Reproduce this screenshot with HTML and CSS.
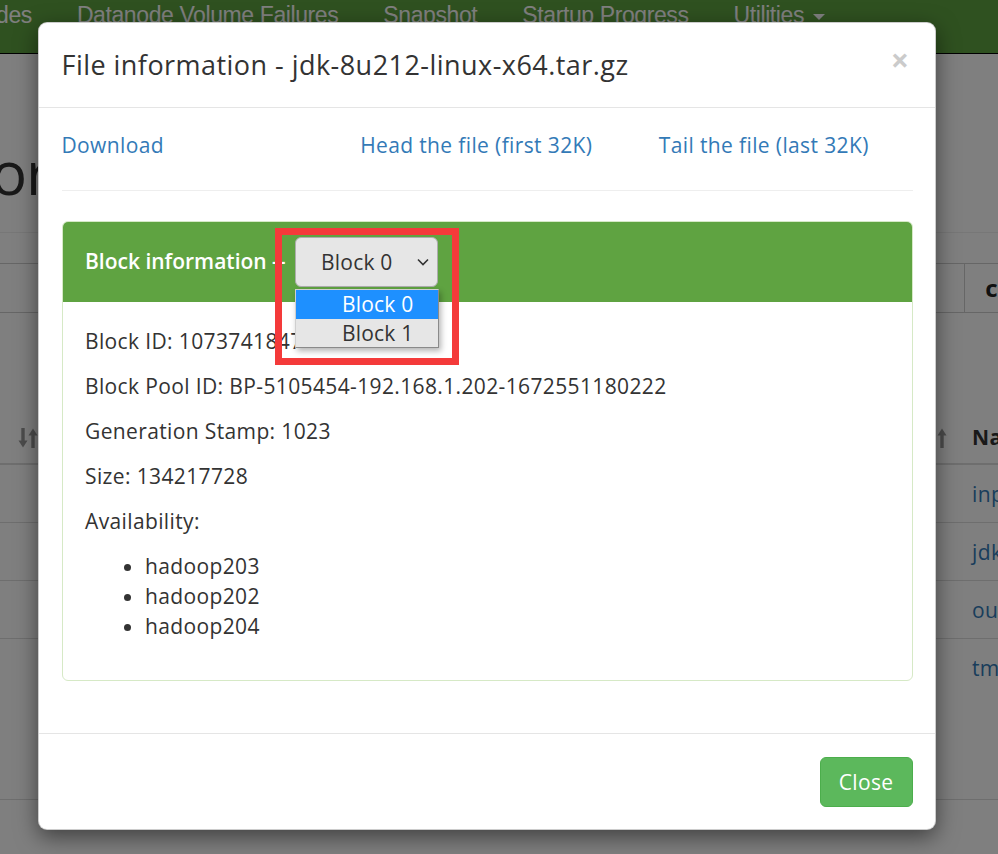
FILE: index.html
```html
<!DOCTYPE html>
<html>
<head>
<meta charset="utf-8">
<link rel="stylesheet" href="styles.css">
</head>
<body>
<nav class="navbar">
  <ul class="nav">
    <li>des</li>
    <li>Datanode Volume Failures</li>
    <li>Snapshot</li>
    <li>Startup Progress</li>
    <li>Utilities <span class="caret"></span></li>
  </ul>
</nav>
<main class="page">
  <h1 class="page-title">or</h1>
  <div class="page-rule"></div>
  <div class="toolbar">
    <div class="toolbar-input"></div>
    <div class="toolbar-btn"><span class="toolbar-glyph">c</span></div>
  </div>
  <div class="table">
    <div class="trow thead">
      <div class="cell cell-a">
        <svg class="sort" width="20" height="24" viewBox="0 0 20 24">
          <path d="M5 2v14" stroke="#999" stroke-width="3.4"/>
          <path d="M0.5 14.5h9l-4.5 7z" fill="#999"/>
          <path d="M15 22V8" stroke="#999" stroke-width="3.4"/>
          <path d="M10.5 9.5h9l-4.5 -7z" fill="#999"/>
        </svg>
      </div>
      <div class="cell cell-b">
        <svg class="sort" width="10" height="24" viewBox="0 0 10 24">
          <path d="M5 22V8" stroke="#999" stroke-width="3.4"/>
          <path d="M0.5 9.5h9l-4.5 -7z" fill="#999"/>
        </svg>
      </div>
      <div class="cell cell-c"><b>Name</b></div>
    </div>
    <div class="trow"><div class="cell cell-a"></div><div class="cell cell-b"></div><div class="cell cell-c"><a>input</a></div></div>
    <div class="trow"><div class="cell cell-a"></div><div class="cell cell-b"></div><div class="cell cell-c"><a>jdk-8u212-linux-x64.tar.gz</a></div></div>
    <div class="trow"><div class="cell cell-a"></div><div class="cell cell-b"></div><div class="cell cell-c"><a>output</a></div></div>
    <div class="trow trow-last"><div class="cell cell-a"></div><div class="cell cell-b"></div><div class="cell cell-c"><a>tmp</a></div></div>
  </div>
  <div class="page-foot-rule"></div>
</main>

<div class="backdrop"></div>

<div class="modal">
  <div class="modal-header">
    <h4 class="modal-title">File information - jdk-8u212-linux-x64.tar.gz</h4>
    <span class="close">×</span>
  </div>
  <div class="modal-body">
    <div class="links">
      <div class="col"><a>Download</a></div>
      <div class="col"><a>Head the file (first 32K)</a></div>
      <div class="col"><a>Tail the file (last 32K)</a></div>
    </div>
    <hr class="divider">
    <div class="panel">
      <div class="panel-heading">
        <span class="panel-label">Block information -- </span>
        <div class="select">
          <span>Block 0</span>
          <svg class="chevron" width="12" height="8" viewBox="0 0 12 8"><polyline points="1,1.5 6,6.5 11,1.5" fill="none" stroke="#333" stroke-width="1.6"/></svg>
        </div>
      </div>
      <div class="panel-body">
        <p>Block ID: 1073741847</p>
        <p>Block Pool ID: BP-5105454-192.168.1.202-1672551180222</p>
        <p>Generation Stamp: 1023</p>
        <p>Size: 134217728</p>
        <p>Availability:</p>
        <ul>
          <li>hadoop203</li>
          <li>hadoop202</li>
          <li>hadoop204</li>
        </ul>
      </div>
    </div>
  </div>
  <div class="modal-footer">
    <button class="btn-close">Close</button>
  </div>

  <div class="dropdown">
    <div class="option option-active">Block 0</div>
    <div class="option">Block 1</div>
  </div>
  <div class="highlight"></div>
</div>
</body>
</html>
```

FILE: styles.css
```css
html, body {
  margin: 0;
  padding: 0;
}
body {
  width: 998px;
  height: 854px;
  overflow: hidden;
  background: #fff;
  font-family: "Open Sans", "Noto Sans", sans-serif;
  font-size: 21px;
  line-height: 30px;
  letter-spacing: 0.37px;
  color: #333;
  position: relative;
}

/* ---------- background page ---------- */
.navbar {
  height: 53px;
  background: #5fa341;
  border-bottom: 1px solid #000;
}
.nav {
  list-style: none;
  margin: 0;
  padding: 0;
  display: flex;
  gap: 45px;
  margin-left: -4px;
  font-family: "Liberation Sans", sans-serif;
  font-size: 23px;
  line-height: 30px;
  color: #fff;
  letter-spacing: -0.4px;
}
.nav li {
  white-space: nowrap;
}
.caret {
  display: inline-block;
  width: 0;
  height: 0;
  border-left: 6px solid transparent;
  border-right: 6px solid transparent;
  border-top: 6px solid #fff;
  vertical-align: middle;
  margin-left: 3px;
}
.page-title {
  margin: 83px 0 0 -9px;
  font-size: 60px;
  line-height: 70px;
  font-weight: 400;
  letter-spacing: -1px;
  color: #333;
}
.page-rule {
  margin-top: 25px;
  border-top: 1px solid #eee;
}
.toolbar {
  margin-top: 30px;
  height: 48px;
  display: flex;
  border-top: 1px solid #ccc;
  border-bottom: 1px solid #ccc;
}
.toolbar-input {
  width: 975px;
  border-right: 1px solid #ccc;
}
.toolbar-btn {
  flex: 1;
  padding-left: 20px;
  display: flex;
  align-items: center;
}
.toolbar-glyph {
  color: #222;
  font-size: 24px;
  font-weight: 700;
}
.table {
  margin-top: 92px;
}
.trow {
  display: grid;
  grid-template-columns: 48px 909px 1fr;
  height: 58px;
  border-bottom: 1px solid #ddd;
  align-items: center;
  box-sizing: border-box;
}
.thead {
  border-bottom: 2px solid #ddd;
  align-items: end;
  padding-bottom: 11px;
  height: 60px;
}
.trow-last {
  border-bottom: none;
}
.cell {
  white-space: nowrap;
  overflow: hidden;
}
.cell-a, .cell-b {
  text-align: right;
  padding-right: 10px;
}
.cell-c {
  padding-left: 15px;
}
.cell-c b {
  color: #333;
  font-weight: 700;
}
.cell-c a {
  color: #337ab7;
}
.sort {
  display: inline-block;
  vertical-align: middle;
  margin-bottom: 2px;
}
.page-foot-rule {
  margin-top: 102px;
  border-top: 1px solid #ddd;
}

.backdrop {
  position: absolute;
  inset: 0;
  background: rgba(0, 0, 0, 0.5);
}

/* ---------- modal ---------- */
.modal {
  position: absolute;
  left: 38px;
  top: 22px;
  width: 896px;
  background: #fff;
  border: 1px solid rgba(0, 0, 0, 0.2);
  border-radius: 9px;
  box-shadow: 0 7px 22px rgba(0, 0, 0, 0.5);
}
.modal-header {
  padding: 22px 22.5px 23px;
  border-bottom: 1px solid #e5e5e5;
  display: flex;
  justify-content: space-between;
  align-items: center;
}
.modal-title {
  margin: 0;
  font-size: 27px;
  line-height: 39px;
  font-weight: 400;
  letter-spacing: 0.46px;
  color: #333;
}
.close {
  font-size: 32px;
  font-weight: 700;
  line-height: 1;
  color: #000;
  opacity: 0.2;
  margin-right: 3px;
  margin-top: -10px;
}
.modal-body {
  padding: 21.5px 22.5px 22.5px;
}
.links {
  display: grid;
  grid-template-columns: repeat(3, 1fr);
  margin: 0 -22.5px;
}
.links .col {
  padding: 0 22.5px;
}
a {
  color: #337ab7;
  text-decoration: none;
}
.divider {
  margin: 30.5px 0 30px;
  border: 0;
  border-top: 1px solid #eee;
}
.panel {
  border: 1px solid #d6e9c6;
  border-radius: 6px;
  margin-bottom: 30px;
}
.panel-heading {
  background: #5fa341;
  color: #fff;
  padding: 15px 22.5px;
  border-radius: 5px 5px 0 0;
  display: flex;
  align-items: center;
}
.panel-label {
  font-weight: 600;
  white-space: pre;
  letter-spacing: 0;
  margin-top: -3px;
}
.select {
  box-sizing: border-box;
  width: 143px;
  height: 50px;
  margin-left: 4px;
  background: #e6e6e6;
  border: 1px solid #adadad;
  border-radius: 6px;
  color: #333;
  display: flex;
  align-items: center;
  justify-content: space-between;
  padding: 0 8px 0 25px;
  letter-spacing: 0.2px;
}
.chevron {
  display: block;
}
.panel-body {
  padding: 24px 22.5px 23.5px;
}
.panel-body p {
  margin: 0 0 15px;
}
.panel-body ul {
  margin: 0 0 15px;
  padding-left: 60px;
}

.modal-footer {
  padding: 22.5px;
  border-top: 1px solid #e5e5e5;
  display: flex;
  justify-content: flex-end;
}
.btn-close {
  font-family: inherit;
  font-size: 21px;
  line-height: 30px;
  letter-spacing: 0.37px;
  padding: 9px 18px;
  color: #fff;
  background: #5cb85c;
  border: 1px solid #4cae4c;
  border-radius: 6px;
}

/* ---------- overlays ---------- */
.dropdown {
  position: absolute;
  left: 256px;
  top: 266px;
  width: 144px;
  border: 1px solid #8a8a8a;
  border-top-color: #cfcfcf;
  border-left-color: #cfcfcf;
  background: #e6e6e6;
  box-shadow: 2px 3px 6px rgba(0, 0, 0, 0.3);
  color: #333;
  font-size: 21px;
  letter-spacing: 0.2px;
  box-sizing: border-box;
}
.option {
  height: 28.5px;
  line-height: 28px;
  padding-left: 46px;
}
.option-active {
  background: #1e90ff;
  color: #fff;
}
.highlight {
  position: absolute;
  left: 236px;
  top: 205px;
  width: 184px;
  height: 137px;
  border: 7px solid #f43a3a;
  box-sizing: border-box;
}
```
